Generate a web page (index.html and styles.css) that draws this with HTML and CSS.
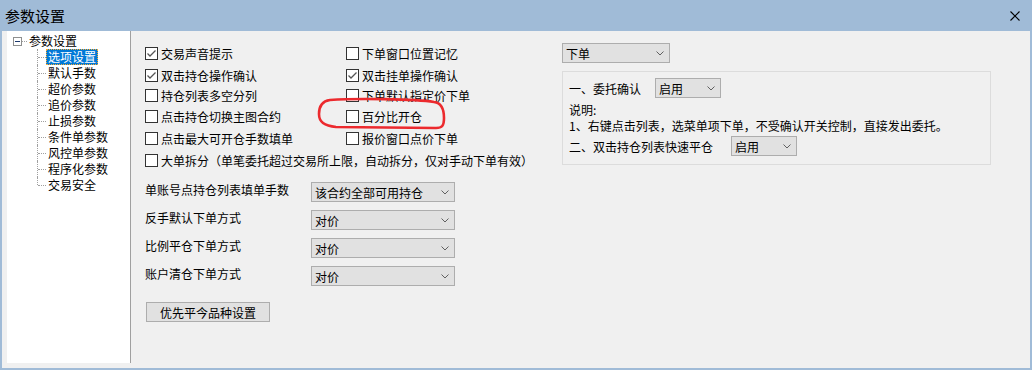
FILE: index.html
```html
<!DOCTYPE html>
<html lang="zh-CN">
<head>
    <meta charset="UTF-8">
    <title>参数设置</title>
    <link rel="stylesheet" href="styles.css">
</head>
<body>
    <div class="window">
        <div class="titlebar">
            <span class="title">参数设置</span>
            <svg class="close" width="10" height="10" viewBox="0 0 10 10"><path d="M0.5 0.5 L9.5 9.5 M9.5 0.5 L0.5 9.5" stroke="#000" stroke-width="1.1" fill="none"/></svg>
        </div>
        <div class="client">
            <div class="tree">
                <div class="root-row">
                    <span class="expander"></span>
                    <span class="stub"></span>
                    <span class="node-label">参数设置</span>
                </div>
                <ul class="children">
                    <li><span class="node-label selected">选项设置</span></li>
                    <li><span class="node-label">默认手数</span></li>
                    <li><span class="node-label">超价参数</span></li>
                    <li><span class="node-label">追价参数</span></li>
                    <li><span class="node-label">止损参数</span></li>
                    <li><span class="node-label">条件单参数</span></li>
                    <li><span class="node-label">风控单参数</span></li>
                    <li><span class="node-label">程序化参数</span></li>
                    <li><span class="node-label">交易安全</span></li>
                </ul>
            </div>

            <div class="main">
                <div class="options">
                    <div class="checks">
                        <label class="check"><span class="box checked"><svg width="11" height="11" viewBox="0 0 11 11"><path d="M1.5 5.5 L4 8 L9.5 2.5" stroke="#555" stroke-width="1.3" fill="none"/></svg></span>交易声音提示</label>
                        <label class="check"><span class="box"></span>下单窗口位置记忆</label>
                        <label class="check"><span class="box checked"><svg width="11" height="11" viewBox="0 0 11 11"><path d="M1.5 5.5 L4 8 L9.5 2.5" stroke="#555" stroke-width="1.3" fill="none"/></svg></span>双击持仓操作确认</label>
                        <label class="check"><span class="box checked"><svg width="11" height="11" viewBox="0 0 11 11"><path d="M1.5 5.5 L4 8 L9.5 2.5" stroke="#555" stroke-width="1.3" fill="none"/></svg></span>双击挂单操作确认</label>
                        <label class="check"><span class="box"></span>持仓列表多空分列</label>
                        <label class="check"><span class="box"></span>下单默认指定价下单</label>
                        <label class="check"><span class="box"></span>点击持仓切换主图合约</label>
                        <label class="check"><span class="box"></span>百分比开仓</label>
                        <label class="check"><span class="box"></span>点击最大可开仓手数填单</label>
                        <label class="check"><span class="box"></span>报价窗口点价下单</label>
                        <label class="check wide"><span class="box"></span>大单拆分（单笔委托超过交易所上限，自动拆分，仅对手动下单有效）</label>
                    </div>

                    <div class="fields">
                        <div class="field-labels">
                            <span>单账号点持仓列表填单手数</span>
                            <span>反手默认下单方式</span>
                            <span>比例平仓下单方式</span>
                            <span>账户清仓下单方式</span>
                        </div>
                        <div class="field-combos">
                            <div class="combo w144"><span>该合约全部可用持仓</span><svg width="8" height="5" viewBox="0 0 8 5"><path d="M0.5 0.5 L4 4 L7.5 0.5" stroke="#606060" fill="none"/></svg></div>
                            <div class="combo w144"><span>对价</span><svg width="8" height="5" viewBox="0 0 8 5"><path d="M0.5 0.5 L4 4 L7.5 0.5" stroke="#606060" fill="none"/></svg></div>
                            <div class="combo w144"><span>对价</span><svg width="8" height="5" viewBox="0 0 8 5"><path d="M0.5 0.5 L4 4 L7.5 0.5" stroke="#606060" fill="none"/></svg></div>
                            <div class="combo w144"><span>对价</span><svg width="8" height="5" viewBox="0 0 8 5"><path d="M0.5 0.5 L4 4 L7.5 0.5" stroke="#606060" fill="none"/></svg></div>
                        </div>
                    </div>

                    <button class="btn">优先平今品种设置</button>
                </div>

                <div class="side">
                    <div class="combo w108"><span>下单</span><svg width="8" height="5" viewBox="0 0 8 5"><path d="M0.5 0.5 L4 4 L7.5 0.5" stroke="#606060" fill="none"/></svg></div>
                    <div class="group">
                        <div class="group-row">
                            <span class="group-label w86">一、委托确认</span>
                            <div class="combo w66"><span>启用</span><svg width="8" height="5" viewBox="0 0 8 5"><path d="M0.5 0.5 L4 4 L7.5 0.5" stroke="#606060" fill="none"/></svg></div>
                        </div>
                        <p class="note-title">说明:</p>
                        <p class="note">1、右键点击列表，选菜单项下单，不受确认开关控制，直接发出委托。</p>
                        <div class="group-row second">
                            <span class="group-label w162">二、双击持仓列表快速平仓</span>
                            <div class="combo w66"><span>启用</span><svg width="8" height="5" viewBox="0 0 8 5"><path d="M0.5 0.5 L4 4 L7.5 0.5" stroke="#606060" fill="none"/></svg></div>
                        </div>
                    </div>
                </div>

                <!-- 红圈标注 -->
                <svg class="mark" width="132" height="36" viewBox="0 0 132 36">
                    <path d="M14 4 C40 2, 100 3, 118 6 C126 7, 128 14, 128 22 C128 30, 126 32, 120 32 L20 31 C8 30, 3 26, 3 18 C3 10, 7 5, 14 4 Z" stroke="#ec2a2e" stroke-width="2.6" fill="none"/>
                </svg>
            </div>
        </div>
    </div>
</body>
</html>
```

FILE: styles.css
```css
body {
    margin: 0;
    font-family: "Noto Sans CJK SC", "Noto Sans", sans-serif;
    font-size: 12px;
    color: #000;
}
.window {
    width: 1032px;
    height: 370px;
    box-sizing: border-box;
    background: #a0bbd7;
    padding: 0 2px 2px 2px;
    display: flex;
    flex-direction: column;
}
.titlebar {
    height: 31px;
    flex: none;
    display: flex;
    align-items: center;
    justify-content: space-between;
    padding: 0 10px 0 3px;
}
.title {
    font-size: 15px;
}
.client {
    flex: 1;
    min-height: 0;
    display: flex;
    background: #f0f0f0;
    padding: 0 0 5px 5px;
}

/* tree */
.tree {
    width: 123px;
    background: #fff;
    border-right: 1px solid #a0a0a0;
    padding-top: 2px;
}
.root-row {
    height: 16px;
    display: flex;
    align-items: center;
    padding-left: 6px;
}
.expander {
    width: 9px;
    height: 9px;
    box-sizing: border-box;
    border: 1px solid #8e8f8f;
    display: flex;
    align-items: center;
    justify-content: center;
}
.expander::before {
    content: "";
    width: 5px;
    height: 1px;
    background: #1e3a6e;
}
.stub {
    width: 5px;
    border-top: 1px dotted #a0a0a0;
}
.node-label {
    line-height: 14px;
    height: 14px;
    padding: 0 1px;
    border: 1px solid transparent;
    white-space: nowrap;
}
.node-label.selected {
    background: #0078d7;
    color: #fff;
    border: 1px dotted #ffae2e;
}
.children {
    list-style: none;
    margin: 0 0 0 30px;
    padding: 0;
}
.children li {
    position: relative;
    height: 16px;
    display: flex;
    align-items: center;
    padding-left: 9px;
}
.children li::before {
    content: "";
    position: absolute;
    left: 0;
    top: 0;
    height: 100%;
    border-left: 1px dotted #a0a0a0;
}
.children li:last-child::before {
    height: 8px;
}
.children li::after {
    content: "";
    position: absolute;
    left: 1px;
    top: 8px;
    width: 8px;
    border-top: 1px dotted #a0a0a0;
}

/* main area */
.main {
    flex: 1;
    position: relative;
    display: flex;
    padding-left: 14px;
}
.options {
    width: 417px;
    padding-top: 12px;
}
.checks {
    display: grid;
    grid-template-columns: 201px auto;
    grid-template-rows: 22px 20px 21px 22px 22px 21px;
    align-items: start;
}
.check {
    height: 20px;
    display: flex;
    align-items: center;
    white-space: nowrap;
}
.check.wide {
    grid-column: 1 / 3;
}
.box {
    width: 13px;
    height: 13px;
    box-sizing: border-box;
    border: 1px solid #333;
    background: #fff;
    margin-right: 3px;
    display: flex;
    align-items: center;
    justify-content: center;
    flex: none;
}

.fields {
    display: flex;
    margin-top: 11px;
}
.field-labels {
    width: 166px;
    display: flex;
    flex-direction: column;
    gap: 12px;
}
.field-labels span {
    line-height: 16px;
    height: 16px;
}
.field-combos {
    display: flex;
    flex-direction: column;
    gap: 8px;
}
.combo {
    height: 20px;
    box-sizing: border-box;
    border: 1px solid #adadad;
    background: #e1e1e1;
    display: flex;
    align-items: center;
    justify-content: space-between;
    padding: 0 5px 0 3px;
    white-space: nowrap;
}
.w144 { width: 144px; }
.w108 { width: 108px; }
.w66 { width: 66px; }
.btn {
    margin: 16px 0 0 1px;
    width: 124px;
    height: 20px;
    padding: 0;
    border: 1px solid #adadad;
    background: #e1e1e1;
    font: inherit;
    color: #000;
}

/* right side */
.side {
    padding-top: 12px;
}
.group {
    margin-top: 8px;
    width: 429px;
    height: 94px;
    box-sizing: border-box;
    border: 1px solid #dcdcdc;
    padding: 6px 6px 0 6px;
}
.group-row {
    display: flex;
    align-items: center;
    height: 20px;
}
.group-row.second {
    margin-top: 2px;
}
.group-label {
    white-space: nowrap;
}
.w86 { width: 86px; }
.w162 { width: 162px; }
.note-title {
    margin: 4px 0 0;
    line-height: 16px;
}
.note {
    margin: 0;
    line-height: 16px;
    white-space: nowrap;
}

.mark {
    position: absolute;
    left: 185px;
    top: 65px;
}
```
